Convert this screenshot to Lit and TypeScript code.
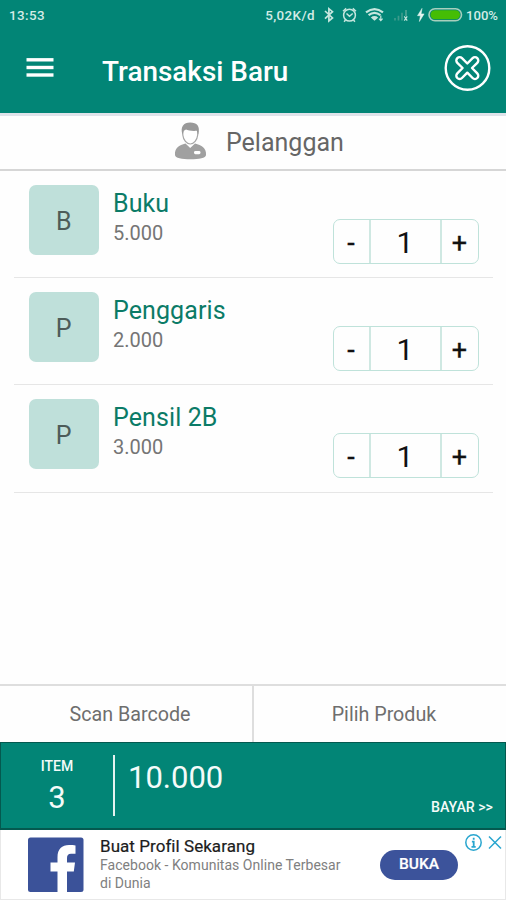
import { LitElement, html, css, svg } from "lit";
import { customElement, property, state } from "lit/decorators.js";

interface Product {
  name: string;
  price: string;
  qty: number;
}

@customElement("status-bar")
class StatusBar extends LitElement {
  static styles = css`
    :host {
      display: flex;
      height: 30px;
      padding: 0 8px 0 9px;
      justify-content: space-between;
      color: #d3ece6;
      font: 500 13.4px/31px Roboto, sans-serif;
    }
    .right {
      display: flex;
      align-items: center;
    }
    .time {
      letter-spacing: 0.4px;
    }
    .rate {
      letter-spacing: 0.4px;
    }
    .level {
      font-size: 13.1px;
    }
    svg {
      display: block;
      width: 151px;
      height: 30px;
    }
  `;
  render() {
    return html`<span class="time">13:53</span>
      <div class="right">
        <span class="rate">5,02K/d</span>
        <svg viewBox="1.5 0 151 30" fill="none" stroke="#c6e6de" stroke-width="1.5">
          <path d="M11.500 11l7.500 7-3.600 3V8.700l3.600 3-7.500 7" stroke-width="1.700" />
          <circle cx="36" cy="15.200" r="5.900" />
          <path d="M33 13.500l3 2.700 3.200-2.700M29.500 11.200l3.200-2.800M42.500 11.200l-3.200-2.800M32 20l-1.400 1.800M40 20l1.400 1.800" />
          <path d="M52.500 12.400q8.500-6.600 17 0M55.100 15.200q5.900-4.600 11.800 0" stroke-width="2.200" />
          <path d="M57.300 17.400q3.700-2.900 7.400 0L61 20.800z" fill="#c6e6de" stroke="none" />
          <path d="M67.300 15.500v5M65.500 18.700l1.800 2 1.800-2" stroke-width="1.200" />
          <path d="M81.500 18v2.600M85 15.800v4.800M88.500 12.800v7.800" stroke="#3d9b8c" stroke-width="1.700" />
          <path d="M92.500 10v6" stroke="#4da494" stroke-width="1.700" />
          <path d="M90.800 16.300l2.900 4.400M93.700 16.300l-2.900 4.400" stroke-width="1.200" />
          <path d="M108.500 8.400l-4.500 7.300h2.900l-1 5.800 4.700-7.600h-3z" fill="#e4f5f0" stroke="#e4f5f0" stroke-width=".5" />
          <rect x="115.500" y="8.800" width="32.500" height="12" rx="6" stroke="#a7cfbd" stroke-width="1.600" />
          <rect x="117" y="10.300" width="29.500" height="9" rx="4.500" fill="#45bd05" stroke="none" />
        </svg>
        <span class="level">100%</span>
      </div>`;
  }
}

@customElement("qty-stepper")
class QtyStepper extends LitElement {
  @property({ type: Number }) value = 1;
  static styles = css`
    :host {
      display: grid;
      grid-template-columns: 35px 73px 1fr;
      box-sizing: border-box;
      width: 146px;
      height: 45px;
      border: 1.500px solid #bfe2da;
      border-radius: 7px;
      color: #111;
      font: 400 30px/46px Roboto, sans-serif;
      text-align: center;
    }
    .minus,
    .plus {
      font-size: 27px;
      -webkit-text-stroke: 0.300px #111;
    }
    .value {
      height: 43px;
      box-sizing: border-box;
      border: solid #cfe8e2;
      border-width: 0 2px 0 2px;
    }
  `;
  private change(d: number) {
    this.value = Math.max(0, this.value + d);
  }
  render() {
    return html`<span class="minus" @click=${() => this.change(-1)}>-</span>
      <span class="value">${this.value}</span>
      <span class="plus" @click=${() => this.change(1)}>+</span>`;
  }
}

@customElement("product-row")
class ProductRow extends LitElement {
  @property({ attribute: false }) product!: Product;
  static styles = css`
    :host {
      display: flex;
      box-sizing: border-box;
      height: 107.200px;
      margin: 0 13px 0 14px;
      padding: 14px 14.500px 0 14.500px;
      border-bottom: 1.500px solid #e6e6e6;
      font-family: Roboto, sans-serif;
    }
    .tile {
      width: 70.500px;
      height: 70px;
      border-radius: 7px;
      background: #bfe0da;
      color: #4d5c59;
      font-size: 25px;
      line-height: 73px;
      text-align: center;
    }
    .info {
      flex: 1;
      padding: 4px 0 0 14px;
    }
    .name {
      color: #0b7b67;
      font-size: 25px;
      line-height: 30px;
      letter-spacing: 0.100px;
    }
    .price {
      color: #757575;
      font-size: 20px;
      line-height: 29px;
    }
    qty-stepper {
      margin-top: 33.800px;
    }
  `;
  render() {
    const p = this.product;
    return html`<div class="tile">${p.name[0]}</div>
      <div class="info">
        <div class="name">${p.name}</div>
        <div class="price">${p.price}</div>
      </div>
      <qty-stepper .value=${p.qty}></qty-stepper>`;
  }
}

@customElement("ad-banner")
class AdBanner extends LitElement {
  static styles = css`
    :host {
      display: flex;
      box-sizing: border-box;
      height: 70px;
      border: 1px solid #e8e8e8;
      border-top: 0;
      background: #fff;
      font-family: Roboto, sans-serif;
      padding: 7px 2px 0 27px;
    }
    .logo {
      width: 56px;
      height: 56px;
    }
    .text {
      width: 280px;
      padding-left: 16px;
    }
    .title {
      color: #1c1c1c;
      font-size: 17px;
      line-height: 18px;
      letter-spacing: 0.050px;
      margin-bottom: 1px;
      -webkit-text-stroke: 0.200px #1c1c1c;
    }
    .desc {
      color: #808080;
      font-size: 14px;
      line-height: 18px;
      width: 250px;
      letter-spacing: 0.030px;
    }
    .open {
      width: 78px;
      height: 30px;
      margin-top: 13px;
      border-radius: 15px;
      background: #3c539b;
      color: #fff;
      font-weight: 500;
      font-size: 15.500px;
      line-height: 29px;
      text-align: center;
      -webkit-text-stroke: 0.200px #fff;
    }
    .choices {
      width: 38px;
      height: 20px;
      margin: -4px 0 0 6px;
    }
  `;
  render() {
    return html`<svg class="logo" viewBox="0 0 56 56">
        <rect y=".5" width="55.500" height="54.500" rx="2.500" fill="#3b5299" />
        <path
          d="M29.500 55V34.500H22.500v-9h7V20C29.500 12 34 8 41 8c2.500 0 5 .2 6.500.4v8.400h-4.500c-3 0-4 1.600-4 4.200v4.500h8l-1.200 9H39V55z"
          fill="#fff"
        />
      </svg>
      <div class="text">
        <div class="title">Buat Profil Sekarang</div>
        <div class="desc">Facebook - Komunitas Online Terbesar di Dunia</div>
      </div>
      <div class="open">BUKA</div>
      <svg class="choices" viewBox="0 0 38 20" fill="none" stroke="#2aa6cf" stroke-width="1.500">
        <circle cx="9.500" cy="9.500" r="7.700" />
        <path d="M9.700 4.800v2M7.900 8.600h1.800v5M7.500 13.800h4.200" stroke-width="1.800" />
        <path d="M25 3.500l12 12M37 3.500L25 15.500" />
      </svg>`;
  }
}

@customElement("app-root")
class AppRoot extends LitElement {
  @state() private products: Product[] = [
    { name: "Buku", price: "5.000", qty: 1 },
    { name: "Penggaris", price: "2.000", qty: 1 },
    { name: "Pensil 2B", price: "3.000", qty: 1 },
  ];
  static styles = css`
    :host {
      display: flex;
      flex-direction: column;
      height: 900px;
      background: #fefefe;
      font-family: Roboto, sans-serif;
      overflow: hidden;
    }
    header {
      box-sizing: border-box;
      height: 113px;
      background: #028576;
    }
    .bar {
      display: flex;
      align-items: center;
      height: 76px;
      padding: 0 15px 0 26px;
    }
    .menu {
      width: 28px;
      height: 20px;
    }
    h1 {
      flex: 1;
      margin: 7px 0 0 48px;
      color: #fff;
      font-size: 27.900px;
      font-weight: 500;
      line-height: 34px;
    }
    .close {
      width: 48px;
      height: 48px;
    }
    .customer {
      display: flex;
      box-sizing: border-box;
      height: 58px;
      border-top: 3px solid #dfe3ea;
      border-bottom: 2px solid #d6d6d6;
      color: #666;
      font-size: 25px;
      line-height: 53px;
      padding-left: 174px;
      gap: 19px;
    }
    .customer svg {
      width: 33px;
      height: 38px;
      margin-top: 6px;
    }
    .list {
      flex: 1;
    }
    .actions {
      display: grid;
      grid-template-columns: 252px 1fr;
      box-sizing: border-box;
      height: 58px;
      border-top: 2px solid #dedede;
      color: #6e6e6e;
      font-size: 19.700px;
      line-height: 58px;
      text-align: center;
    }
    .actions span {
      height: 56px;
      box-sizing: border-box;
      padding-left: 8px;
    }
    .actions span + span {
      border-left: 2px solid #dedede;
    }
    .total {
      display: flex;
      box-sizing: border-box;
      height: 88px;
      border: 1px solid #04594f;
      border-width: 1px 1px 2px 1px;
      background: #028576;
      color: #f4fbf9;
    }
    .count {
      width: 112px;
      text-align: center;
      font-size: 31px;
      line-height: 38px;
      padding-top: 14px;
      box-sizing: border-box;
    }
    .count small {
      display: block;
      font-size: 14px;
      font-weight: 500;
      line-height: 18px;
      margin-bottom: 4px;
    }
    .rule {
      width: 2px;
      height: 61px;
      margin-top: 12px;
      background: #e4f3f0;
    }
    .sum {
      flex: 1;
      padding: 16px 0 0 13px;
      font-size: 31px;
      line-height: 38px;
    }
    .pay {
      align-self: flex-end;
      padding: 0 12px 12px 0;
      font-size: 14.200px;
      font-weight: 500;
      line-height: 18px;
    }
  `;
  render() {
    const bars = [1.8, 9.5, 17];
    return html`
      <header>
        <status-bar></status-bar>
        <div class="bar">
          <svg class="menu" viewBox="0 0 28 20" stroke="#fff" stroke-width="3.400">
            ${bars.map((y) => svg`<path d="M.5 ${y}h27" />`)}
          </svg>
          <h1>Transaksi Baru</h1>
          <svg class="close" viewBox="0 0 48 48" fill="none" stroke="#fff" stroke-width="2.400">
            <circle cx="24.500" cy="24" r="21.800" />
            <path
              stroke-linejoin="round"
              d="M24.300 19.500L29.600 14.200A3.300 3.300 0 0 1 34.300 18.900L29 24L34.300 29.300A3.300 3.300 0 0 1 29.600 34L24.300 28.700L19 34A3.300 3.300 0 0 1 14.300 29.300L19.600 24L14.300 18.900A3.300 3.300 0 0 1 19 14.200Z"
            />
          </svg>
        </div>
      </header>
      <div class="customer">
        <svg viewBox="0 0 33 38">
          <path d="M8.800 9v4c.5 5 4 9 7.500 9s6.900-4 7.400-9V9" fill="#fff" stroke="#a6a6a6" stroke-width="1.200" />
          <path d="M8.500 12.500C6 5 9.500 .5 16.200.5S26.500 4 24.300 12.500L22.800 8.800C18 9.200 14 8.500 12 7.500L9.800 8.800z" fill="#999" />
          <path d="M1 33c-.5-7 4-9.700 10.500-11.500l4.700 4.500 4.800-4.500C27.500 23.300 32.500 26 32 33c0 3-7 4.300-15.500 4.300S1 36 1 33z" fill="#a0a0a0" />
          <rect x="20" y="29" width="6.500" height="3.200" rx="1.400" fill="#fff" />
        </svg>
        <span>Pelanggan</span>
      </div>
      <div class="list">
        ${this.products.map((p) => html`<product-row .product=${p}></product-row>`)}
      </div>
      <div class="actions"><span>Scan Barcode</span><span>Pilih Produk</span></div>
      <div class="total">
        <div class="count"><small>ITEM</small>3</div>
        <div class="rule"></div>
        <div class="sum">10.000</div>
        <div class="pay">BAYAR &gt;&gt;</div>
      </div>
      <ad-banner></ad-banner>
    `;
  }
}
